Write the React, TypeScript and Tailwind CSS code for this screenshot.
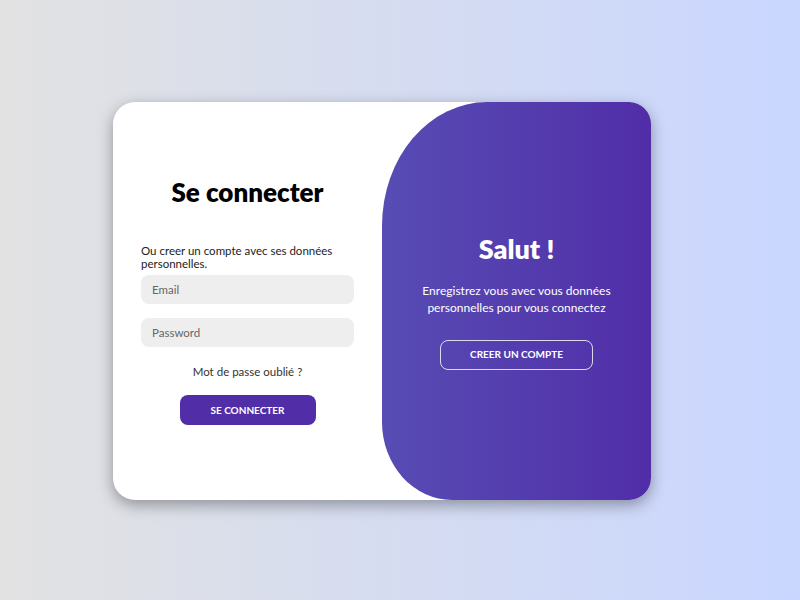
export default function App() {
  return (
    <div
      className="flex h-screen w-full items-center bg-gradient-to-r from-[#e2e2e2] to-[#c9d6ff] pl-[113px]"
      style={{ fontFamily: "Lato, 'Noto Sans', sans-serif" }}
    >
      <div className="mt-[2px] flex h-[398px] w-[538px] overflow-hidden rounded-[22px] bg-white shadow-[0_5px_15px_rgba(0,0,0,0.35)]">
        <div className="flex w-[269px] flex-col items-center justify-center px-[28px] pb-[2px]">
          <h1 className="text-[26px] font-extrabold leading-[34px] text-black">Se connecter</h1>
          <span className="mt-[35px] w-full text-[11.5px] leading-[13px] text-[#222]">
            Ou creer un compte avec ses données personnelles.
          </span>
          <input
            placeholder="Email"
            className="mt-[5px] h-[29px] w-full rounded-[8px] bg-[#eeeeee] px-[11px] text-[11.5px] outline-none placeholder:text-[#666]"
          />
          <input
            placeholder="Password"
            type="password"
            className="mt-[14px] h-[29px] w-full rounded-[8px] bg-[#eeeeee] px-[11px] text-[11.5px] outline-none placeholder:text-[#666]"
          />
          <a className="mt-[17px] text-[11.5px] leading-[16px] text-[#333]">Mot de passe oublié ?</a>
          <button className="mt-[15px] h-[30px] w-[136px] rounded-[8px] bg-[#512da8] text-[10px] font-bold uppercase tracking-[0px] text-white">
            Se connecter
          </button>
        </div>
        <div className="flex w-[269px] flex-col items-center justify-center rounded-tl-[105px_124px] rounded-bl-[70px_78px] bg-gradient-to-r from-[#574cb4] to-[#512da8] px-[20px] text-center text-white">
          <h1 className="text-[27px] font-extrabold leading-[32px]">Salut !</h1>
          <p className="mt-[17px] text-[12px] leading-[17px]">
            Enregistrez vous avec vous données
            <br />
            personnelles pour vous connectez
          </p>
          <button className="mt-[24px] h-[30px] w-[153px] rounded-[8px] border border-white/80 bg-transparent text-[10px] font-bold uppercase tracking-[0px] text-white">
            Creer un compte
          </button>
        </div>
      </div>
    </div>
  );
}
